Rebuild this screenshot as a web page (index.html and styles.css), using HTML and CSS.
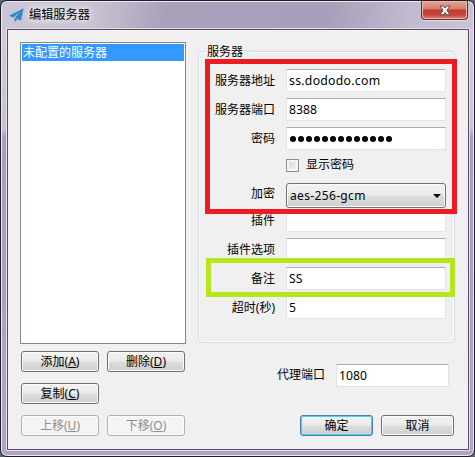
FILE: index.html
```html
<!DOCTYPE html>
<html lang="zh-CN">
<head>
<meta charset="utf-8">
<title>编辑服务器</title>
<link rel="stylesheet" href="styles.css">
</head>
<body>
<div class="window">
  <header class="titlebar">
    <svg class="plane" viewBox="0 0 15 14"><path fill="#2687c6" d="M14.7 0.3 L0 7.7 L4.2 9.6 L11.8 3 L5.6 10 L11.8 12.4 Z M5.1 10.6 L5.9 14 L8.2 11.6 Z"/></svg>
    <h1 class="title">编辑服务器</h1>
    <button class="close" aria-label="关闭"><svg viewBox="0 0 12 11"><path d="M1 1H4.4L6 3.1L7.6 1H11L7.9 5.3L11 9.8H7.6L6 7.5L4.4 9.8H1L4.1 5.3Z" fill="#fff" stroke="#5d4650" stroke-width="1"/></svg></button>
  </header>
  <main class="client">
    <section class="left">
      <div class="list"><div class="item">未配置的服务器</div></div>
      <div class="actions">
        <button class="btn">添加(<u>A</u>)</button>
        <button class="btn">删除(<u>D</u>)</button>
        <button class="btn">复制(<u>C</u>)</button>
        <button class="btn off first">上移(<u>U</u>)</button>
        <button class="btn off">下移(<u>O</u>)</button>
      </div>
    </section>
    <section class="right">
      <div class="group">
        <div class="legend">服务器</div>
        <div class="row"><span class="label">服务器地址</span><div class="field host">ss.dododo.com</div></div>
        <div class="row"><span class="label">服务器端口</span><div class="field">8388</div></div>
        <div class="row"><span class="label">密码</span><div class="field dots"><i></i><i></i><i></i><i></i><i></i><i></i><i></i><i></i><i></i><i></i><i></i><i></i><i></i></div></div>
        <div class="row check"><span class="box"></span><span>显示密码</span></div>
        <div class="row cipher"><span class="label">加密</span><div class="select"><span>aes-256-gcm</span><span class="arrow"></span></div></div>
        <div class="row"><span class="label">插件</span><div class="field"></div></div>
        <div class="row"><span class="label">插件选项</span><div class="field"></div></div>
        <div class="row"><span class="label">备注</span><div class="field remark">SS</div></div>
        <div class="row"><span class="label">超时(秒)</span><div class="field">5</div></div>
        <div class="mark red"></div>
        <div class="mark green"></div>
      </div>
      <div class="proxy"><span class="label">代理端口</span><div class="field">1080</div></div>
      <div class="dialog-actions">
        <button class="btn primary">确定</button>
        <button class="btn">取消</button>
      </div>
    </section>
  </main>
</div>
</body>
</html>
```
FILE: styles.css
```css
* { box-sizing: border-box; }
body {
  margin: 0;
  background: #59636b;
  font: 12px/16px "Noto Sans", "Noto Sans CJK SC", sans-serif;
  color: #000;
}
button { font: inherit; color: inherit; padding: 0; margin: 0; }
.window {
  width: 475px;
  height: 457px;
  border: 1px solid #211d28;
  border-radius: 7px;
  padding: 0 5px 5px;
  box-shadow: inset 0 0 0 1px #eeeaf4;
  background:
    linear-gradient(180deg, #d2cadb 0, #c9c0d4 100px, #a99dbc 108px, #b1a6c2 100%) 0 28px / 100% 100% no-repeat,
    linear-gradient(100deg, #cdc6d6 0, #c7c0d0 18%, #aaa0ba 30%, #a99fba 60%, #c4bbd0 75%, #d0c9da 100%);
}
.titlebar { height: 27px; display: flex; align-items: flex-start; padding: 0 3px; }
.plane { width: 15px; height: 14px; margin: 7px 5px 0 0; }
.title {
  margin: 6px auto 0 0;
  font-size: 12.2px;
  line-height: 16px;
  font-weight: 400;
  text-shadow: 0 0 7px #fff, 0 0 8px #fff;
}
.close {
  width: 47px;
  height: 19px;
  border: 1px solid #5b3039;
  border-top: 0;
  border-radius: 0 0 4px 4px;
  margin-right: -2px;
  background: linear-gradient(#e3a493 0, #d58070 8px, #c03a2b 9px, #c6473a 14px, #e08672 100%);
  box-shadow: inset 0 0 0 1px #edb9ab, 0 1px 0 #e5deeb;
  display: flex;
  justify-content: center;
  padding-top: 4px;
}
.close svg { width: 12px; height: 11px; }
.client {
  height: 421px;
  margin: 1px 0 0 1px;
  width: 462px;
  border: 1px solid #554b66;
  box-shadow: 0 0 0 1px #e5dfec;
  background: #f0f0f0;
  display: flex;
  align-items: flex-start;
  padding: 12px 12px 0;
}
.left { width: 166px; }
.list {
  height: 302px;
  border: 1px solid #828790;
  background: #fff;
  padding: 1px;
}
.item { background: #3399ff; color: #fff; height: 17px; line-height: 17px; padding-left: 1px; }
.actions {
  display: grid;
  grid-template-columns: 78px 78px;
  gap: 11px 8px;
  padding: 7px 0 0 1px;
}
.btn {
  height: 21px;
  line-height: 18px;
  padding-top: 1px;
  border: 1px solid #707070;
  border-radius: 3px;
  box-shadow: inset 0 0 0 1px #fbfbfb;
  background: linear-gradient(#f2f2f2 0, #ebebeb 48%, #dcdcdc 52%, #cfcfcf 100%);
}
.btn u { text-underline-offset: 1px; text-decoration-thickness: 1px; }
.first { grid-column: 1; }
.off { color: #8f8f8f; border-color: #adb2b5; background: #f4f4f4; }
.right { width: 257px; margin-left: 12px; }
.group {
  position: relative;
  height: 292px;
  margin-top: 9px;
  border: 1px solid #d5dfe5;
  border-radius: 4px;
  box-shadow: inset 0 0 0 1px #fbfbfb;
}
.legend {
  height: 17px;
  width: 41px;
  margin: -9px 0 9px 6px;
  padding-left: 2px;
  line-height: 17px;
  background: #f0f0f0;
}
.row { height: 23px; margin-bottom: 6px; display: flex; align-items: center; padding-right: 8px; }
.label { width: 76px; margin-right: 11px; text-align: right; line-height: 22px; white-space: nowrap; }
.field {
  flex: 1;
  height: 23px;
  border: 1px solid #e2e3ea;
  border-top-color: #abadb3;
  border-radius: 1px;
  background: #fff;
  padding-left: 2px;
  line-height: 22px;
  font-size: 12.2px;
}
.host { letter-spacing: 0.3px; }
.dots { display: flex; align-items: center; padding-left: 3px; gap: 2px; }
.dots i { width: 6px; height: 6px; border-radius: 50%; background: #000; }
.check { height: 21px; padding-left: 87px; margin-bottom: 7px; gap: 7px; margin-top: -1px; padding-bottom: 1px; }
.box {
  width: 13px;
  height: 13px;
  border: 1px solid #8e8f8f;
  background: linear-gradient(135deg, #cfd2d6, #f6f6f6);
  box-shadow: inset 0 0 0 2px #f4f4f4;
}
.cipher { height: 25px; margin-bottom: 1px; }
.cipher .label { padding-bottom: 4px; }
.select {
  flex: 1;
  height: 25px;
  border: 1px solid #707070;
  border-radius: 3px;
  box-shadow: inset 0 0 0 1px #fafafa;
  background: linear-gradient(#f2f2f2 0, #ebebeb 48%, #dddddd 52%, #cfcfcf 100%);
  display: flex;
  align-items: center;
  justify-content: space-between;
  padding: 0 4px 0 3px;
  letter-spacing: 0.35px;
}
.arrow { border: 4px solid transparent; border-top-color: #000; border-bottom: 0; }
.mark { position: absolute; border: 5px solid; }
.red { left: 6px; top: 7px; width: 252px; height: 155px; border-color: #ed1c24; }
.green { left: 7px; top: 206px; width: 249px; height: 39px; border-color: #b5e61d; }
.proxy { display: flex; width: 251px; margin-top: 21px; }
.proxy .label { width: 127px; }
.dialog-actions { display: flex; justify-content: flex-end; gap: 8px; margin: 28px 1px 0 0; }
.dialog-actions .btn { width: 73px; }
.primary { border-color: #3c7fb1; box-shadow: inset 0 0 0 1px #48d1f5; }
```
